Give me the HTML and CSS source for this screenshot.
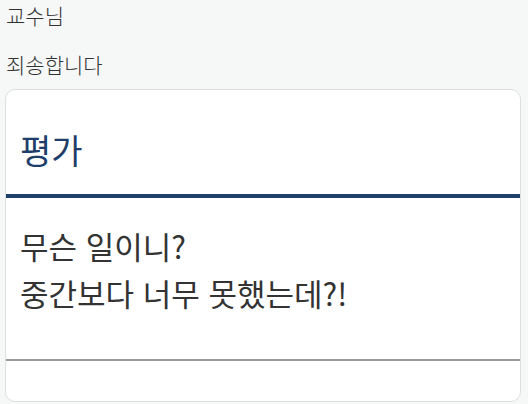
FILE: index.html
```html
<!DOCTYPE html>
<html lang="ko">
<head>
    <meta charset="UTF-8">
    <meta name="viewport" content="width=device-width, initial-scale=1.0">
    <title>평가</title>
    <link rel="stylesheet" href="styles.css">
</head>
<body>

    <p class="note">교수님</p>
    <p class="note">죄송합니다</p>

    <div class="card">
        <h2 class="card-title">평가</h2>
        <div class="card-body">
            <p>무슨 일이니?</p>
            <p>중간보다 너무 못했는데?!</p>
        </div>
        <div class="card-footer"></div>
    </div>

</body>
</html>
```

FILE: styles.css
```css
body {
    font-family: "Noto Sans CJK KR", "Noto Sans", sans-serif;
    background-color: #f6f7f7;
    color: #333;
    margin: 0;
    padding: 1px 7px 0 5px;
}

.note {
    margin: 0;
    font-size: 21px;
    line-height: 28px;
    padding-left: 1px;
    font-weight: 300;
}

.note + .note {
    margin-top: 21px;
}

.card {
    background-color: white;
    border: 1px solid #dcdfe0;
    border-radius: 10px;
    overflow: hidden;
    margin-top: 11px;
}

.card-title {
    margin: 0;
    padding: 38px 14px 22px;
    font-size: 34px;
    line-height: 44px;
    font-weight: 400;
    color: #1f3e6a;
    border-bottom: 4px solid #1f3e6a;
}

.card-body {
    padding: 24px 14px 43px;
    font-size: 31px;
    line-height: 47px;
    color: #333;
    border-bottom: 2px solid #999;
}

.card-body p {
    margin: 0;
}

.card-footer {
    height: 40px;
}
```
